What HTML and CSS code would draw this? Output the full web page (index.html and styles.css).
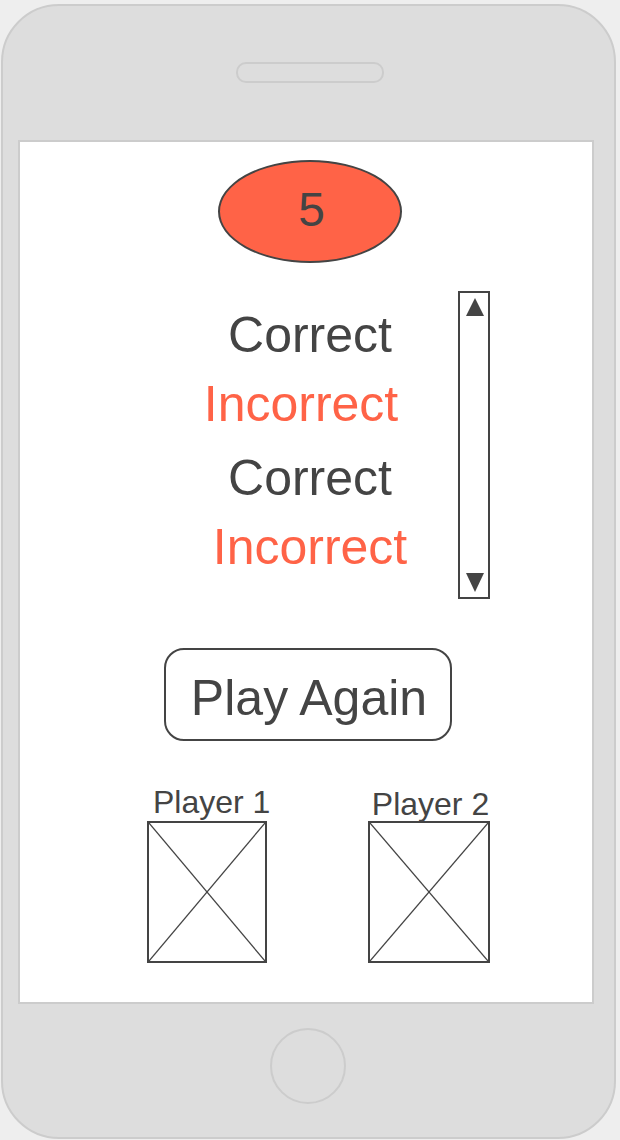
FILE: index.html
```html
<!DOCTYPE html>
<html lang="en">
<head>
<meta charset="utf-8">
<title>Game Result</title>
<link rel="stylesheet" href="styles.css">
</head>
<body>
<div class="phone">
  <div class="speaker"></div>
  <div class="screen">
    <div class="score">5</div>
    <div class="results">
      <div class="list">
        <div class="line ok">Correct</div>
        <div class="line bad shift">Incorrect</div>
        <div class="line ok gap">Correct</div>
        <div class="line bad">Incorrect</div>
      </div>
      <div class="scrollbar">
        <svg class="arrow" width="18" height="18" viewBox="0 0 18 18"><polygon points="9,0 18,18 0,18" fill="#444"/></svg>
        <svg class="arrow" width="18" height="19" viewBox="0 0 18 19"><polygon points="0,0 18,0 9,19" fill="#444"/></svg>
      </div>
    </div>
    <div class="again">Play Again</div>
    <div class="players">
      <div class="player p1">
        <div class="label">Player 1</div>
        <div class="avatar">
          <svg width="100%" height="100%" viewBox="0 0 100 100" preserveAspectRatio="none"><line x1="0" y1="0" x2="100" y2="100" stroke="#444" stroke-width="1.3" vector-effect="non-scaling-stroke"/><line x1="100" y1="0" x2="0" y2="100" stroke="#444" stroke-width="1.3" vector-effect="non-scaling-stroke"/></svg>
        </div>
      </div>
      <div class="player p2">
        <div class="label">Player 2</div>
        <div class="avatar">
          <svg width="100%" height="100%" viewBox="0 0 100 100" preserveAspectRatio="none"><line x1="0" y1="0" x2="100" y2="100" stroke="#444" stroke-width="1.3" vector-effect="non-scaling-stroke"/><line x1="100" y1="0" x2="0" y2="100" stroke="#444" stroke-width="1.3" vector-effect="non-scaling-stroke"/></svg>
        </div>
      </div>
    </div>
  </div>
  <div class="home"></div>
</div>
</body>
</html>
```

FILE: styles.css
```css
* { box-sizing: border-box; }
html, body {
  margin: 0;
  padding: 0;
  background: #eeeeee;
  width: 620px;
  height: 1140px;
  overflow: hidden;
  font-family: "Liberation Sans", Arial, sans-serif;
  color: #444444;
}
.phone {
  margin: 4px 0 0 1px;
  width: 615px;
  height: 1135px;
  background: #dddddd;
  border: 2px solid #cccccc;
  border-radius: 58px;
  display: flex;
  flex-direction: column;
  align-items: center;
}
.speaker {
  margin-top: 56px;
  margin-left: 3px;
  width: 148px;
  height: 21px;
  border: 2px solid #cccccc;
  border-radius: 10px;
}
.screen {
  margin-top: 57px;
  margin-right: 5px;
  width: 576px;
  height: 864px;
  background: #ffffff;
  border: 2px solid #cccccc;
  padding-left: 8px;
  display: flex;
  flex-direction: column;
  align-items: center;
}
.score {
  margin-top: 18px;
  width: 184px;
  height: 103px;
  border-radius: 50%;
  background: #ff6347;
  border: 2px solid #444444;
  font-size: 48px;
  display: flex;
  align-items: center;
  justify-content: center;
  padding-bottom: 4px;
  padding-left: 3px;
}
.results {
  margin-top: 28px;
  width: 100%;
  display: grid;
  grid-template-columns: 1fr 220px 1fr;
  height: 308px;
}
.list {
  grid-column: 2;
  padding-top: 10px;
  font-size: 50px;
  text-align: center;
}
.line {
  line-height: 69px;
  height: 69px;
  white-space: nowrap;
}
.line.gap { margin-top: 5px; }
.line.shift { padding-right: 18px; }
.ok { color: #444444; }
.bad { color: #ff6347; }
.scrollbar {
  grid-column: 3;
  margin-left: 38px;
  width: 32px;
  height: 308px;
  border: 2px solid #444444;
  display: flex;
  flex-direction: column;
  justify-content: space-between;
  align-items: center;
  padding: 5px 0 5px 2px;
}
.arrow { display: block; }
.again {
  margin-top: 49px;
  margin-right: 4px;
  width: 288px;
  height: 93px;
  border: 2px solid #444444;
  border-radius: 20px;
  font-size: 50px;
  display: flex;
  align-items: center;
  justify-content: center;
  padding-top: 6px;
  padding-left: 2px;
  white-space: nowrap;
}
.players {
  margin-top: 43px;
  margin-left: 17px;
  display: flex;
  gap: 101px;
}
.player {
  display: flex;
  flex-direction: column;
}
.p1 { width: 120px; }
.p2 { width: 122px; }
.label {
  font-size: 32px;
  height: 37px;
  line-height: 37px;
  text-align: center;
  white-space: nowrap;
}
.p1 .label { padding-left: 6px; }
.p2 .label { padding-left: 3px; padding-top: 3px; line-height: 34px; }
.avatar {
  height: 142px;
  border: 2px solid #444444;
}
.avatar svg { display: block; }
.home {
  margin-top: 24px;
  margin-right: 1px;
  width: 76px;
  height: 76px;
  border: 2px solid #cccccc;
  border-radius: 50%;
}
```
